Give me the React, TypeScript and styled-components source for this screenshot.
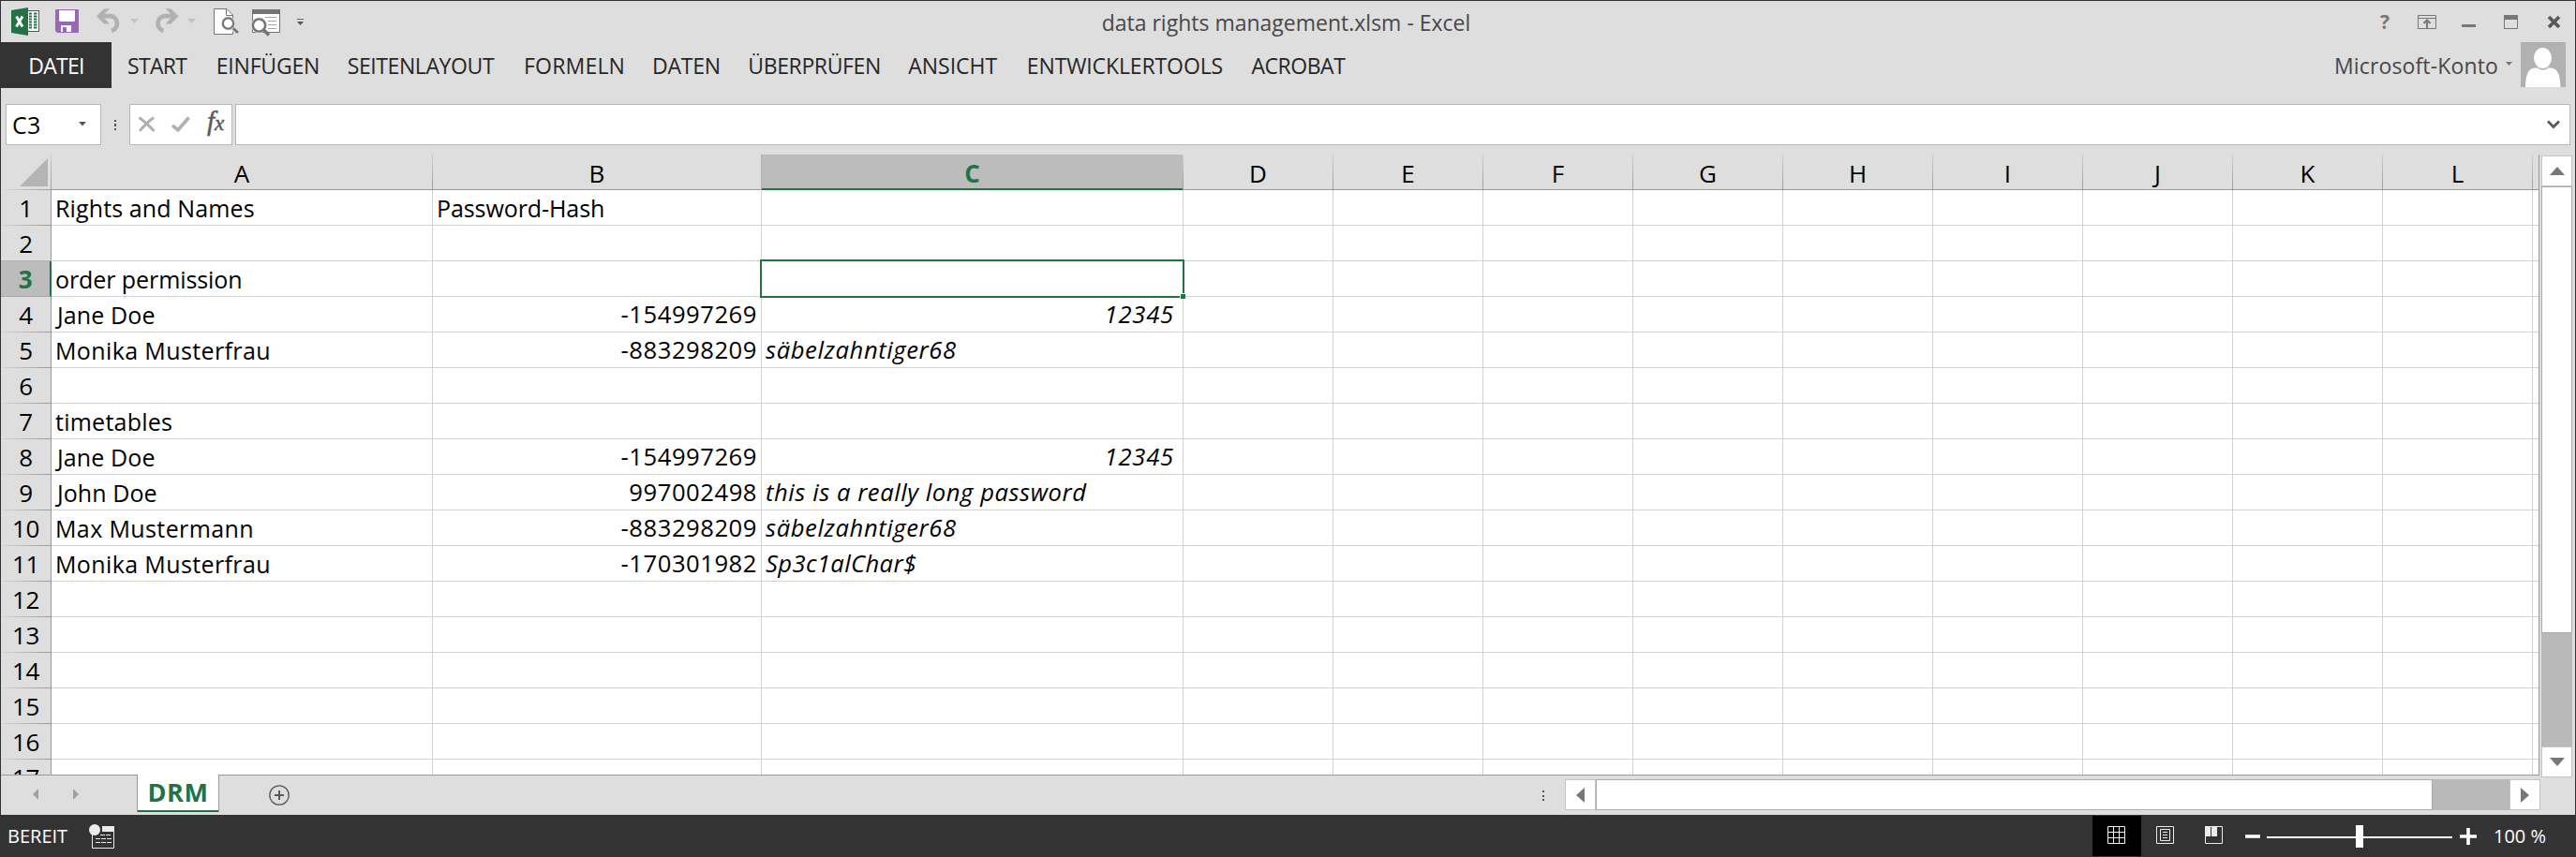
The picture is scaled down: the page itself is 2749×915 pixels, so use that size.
import React from "react";
import styled, { createGlobalStyle, css } from "styled-components";

const color = {
  chrome: "#dedede",
  dark: "#333333",
  green: "#217346",
  line: "#d2d2d2",
  edge: "#999999",
  box: "#b8b8b8",
  icon: "#777777",
  selected: "#bcbcbc",
};

const GlobalStyle = createGlobalStyle`
  *, *::before, *::after { box-sizing: border-box; }
  html, body { margin: 0; padding: 0; }
  body {
    background: ${color.chrome};
    font-family: "Open Sans", "Noto Sans", sans-serif;
    overflow: hidden;
  }
  svg { display: block; flex: none; }
`;

const Window = styled.div`
  display: flex;
  flex-direction: column;
  width: 2749px;
  height: 915px;
  background: ${color.chrome};
  border: solid ${color.dark};
  border-width: 1px 1px 0;
  overflow: hidden;
`;

/* Title bar */
const TitleBar = styled.header`
  display: grid;
  grid-template-columns: 1fr auto 1fr;
  height: 44px;
  flex: none;
`;
const QuickAccess = styled.div`
  display: flex;
  padding-left: 11px;
`;
const QuickSlot = styled.span<{ $gap?: number }>`
  margin-left: ${(p) => p.$gap ?? 0}px;
`;
const Title = styled.div`
  margin-right: 4px;
  padding-top: 2px;
  font-size: 23px;
  line-height: 42px;
  color: #484848;
  white-space: nowrap;
`;
const WindowButtons = styled.div`
  display: flex;
  justify-content: flex-end;
  align-items: center;
  padding-right: 15px;
`;
const WindowButton = styled.span<{ $gap: number }>`
  margin-right: ${(p) => p.$gap}px;
`;
const Help = styled(WindowButton)`
  width: 11px;
  font-size: 21px;
  font-weight: 700;
  line-height: 40px;
  color: ${color.icon};
`;

/* Ribbon */
const Ribbon = styled.nav`
  display: flex;
  height: 49px;
  flex: none;
`;
const FileTab = styled.div`
  width: 118px;
  margin-right: 17px;
  background: ${color.dark};
  color: #fff;
  font-size: 23px;
  letter-spacing: -0.7px;
  line-height: 50px;
  text-align: center;
`;
const RibbonTab = styled.div<{ $width: number; $spacing: number }>`
  flex: none;
  width: ${(p) => p.$width}px;
  font-size: 23px;
  letter-spacing: ${(p) => p.$spacing}px;
  line-height: 50px;
  color: #262626;
  white-space: nowrap;
`;
const Account = styled.div`
  display: flex;
  margin-left: auto;
  margin-right: 10px;
  font-size: 23px;
  letter-spacing: 0.14px;
  line-height: 50px;
  color: #484848;
`;
const AccountCaret = styled.span`
  margin: 21px 9px 0 8px;
`;

/* Formula bar */
const FormulaBar = styled.div`
  display: flex;
  height: 44px;
  margin: 17px 5px 10px;
  flex: none;
`;
const Field = styled.div`
  display: flex;
  align-items: center;
  background: #fff;
  border: 1px solid ${color.box};
`;
const NameBox = styled(Field)`
  width: 102px;
  padding: 0 15px 0 6px;
  justify-content: space-between;
  font-size: 25px;
  letter-spacing: 0.25px;
  line-height: 40px;
  color: #000;
`;
const FormulaButtons = styled(Field)`
  width: 110px;
  margin-right: 3px;
  padding-left: 8px;
  gap: 17px;
`;
const Fx = styled.span`
  margin: -5px 0 0 1px;
  font: italic 400 29px/30px "Liberation Serif", serif;
  -webkit-text-stroke: 0.5px #5a5a5a;
  color: #5a5a5a;
  small { font-size: 23px; }
`;
const FormulaInput = styled(Field)`
  flex: 1;
  justify-content: flex-end;
  padding-right: 10px;
`;
const Grip = styled.div<{ $before: number; $after: number; $top: number }>`
  width: 2px;
  height: 11px;
  margin: ${(p) => p.$top}px ${(p) => p.$after}px 0 ${(p) => p.$before}px;
  background: repeating-linear-gradient(#555 0 2px, transparent 2px 4.5px);
  flex: none;
`;

/* Sheet */
const Workspace = styled.div`
  display: flex;
  height: 663px;
  flex: none;
`;
const Sheet = styled.main`
  width: 2709px;
  height: 663px;
  overflow: hidden;
  background: #fff;
  border: solid ${color.edge};
  border-width: 0 1px 1px 0;
`;
const ColumnHeads = styled.div`
  display: flex;
  width: 2709px;
  height: 38px;
  background: ${color.chrome};
`;
const headBase = css`
  flex: none;
  color: #000;
  font-size: 26px;
  text-align: center;
`;
const ColumnHead = styled.div<{ $width: number; $active?: boolean }>`
  ${headBase}
  position: relative;
  width: ${(p) => p.$width}px;
  height: 38px;
  padding-top: 1px;
  line-height: 39px;
  border-right: 1px solid;
  border-image: linear-gradient(#d0d0d0, ${color.edge}) 1;
  box-shadow: inset 0 -1px ${color.edge};
  ${(p) =>
    p.$active &&
    css`
      background: ${color.selected};
      color: ${color.green};
      font-weight: 700;
      box-shadow: -1px 0 #b0b0b0, inset 0 -2px ${color.green};
    `}
`;
const Corner = styled.div`
  width: 54px;
  padding: 4px 0 0 20px;
  border-right: 1px solid;
  border-image: linear-gradient(#d0d0d0, ${color.edge}) 1;
  background: linear-gradient(90deg, ${color.chrome}, ${color.edge}) bottom / 100% 1px no-repeat;
`;
const HeadRest = styled.div`
  flex: 1;
  border-bottom: 1px solid ${color.edge};
`;
const Row = styled.div`
  display: flex;
  height: 38px;
`;
const RowHead = styled.div<{ $active?: boolean }>`
  ${headBase}
  width: 54px;
  height: 38px;
  letter-spacing: -0.4px;
  line-height: 38px;
  border-right: 1px solid ${color.edge};
  background:
    linear-gradient(90deg, #d6d6d6, ${color.edge}) bottom / 100% 1px no-repeat,
    ${color.chrome};
  ${(p) =>
    p.$active &&
    css`
      background: ${color.selected};
      color: ${color.green};
      font-weight: 700;
      border-right: 2px solid ${color.green};
      border-bottom: 1px solid #a8a8a8;
      box-shadow: 0 -1px #b4b4b4;
    `}
`;
const Cell = styled.div<{ $width: number; $column: string; $number?: boolean }>`
  position: relative;
  flex: none;
  width: ${(p) => p.$width}px;
  height: 38px;
  border: solid ${color.line};
  border-width: 0 1px 1px 0;
  padding: 0 ${(p) => (p.$column === "C" ? 9 : 4)}px 0 4px;
  font-size: ${(p) => (p.$column === "C" || p.$number ? 25.6 : 25)}px;
  font-style: ${(p) => (p.$column === "C" ? "italic" : "normal")};
  line-height: 38px;
  text-align: ${(p) => (p.$number ? "right" : "left")};
  white-space: nowrap;
  color: #000;
`;
const Entry = styled.span<{ $spacing: number; $indent?: number }>`
  margin-left: ${(p) => p.$indent ?? 0}px;
  letter-spacing: ${(p) => p.$spacing}px;
`;
const CellRest = styled.div`
  flex: 1;
  border-bottom: 1px solid ${color.line};
`;
const Selection = styled.div`
  position: absolute;
  z-index: 1;
  left: -2px;
  top: -2px;
  width: 453px;
  height: 41px;
  border: 2px solid ${color.green};
  &::after {
    content: "";
    position: absolute;
    right: -3px;
    bottom: -3px;
    width: 6px;
    height: 6px;
    background: ${color.green};
    border: solid #fff;
    border-width: 1px 0 0 1px;
  }
`;

/* Scroll bars */
const VerticalScroll = styled.div`
  display: flex;
  flex-direction: column;
  width: 33px;
  height: 664px;
  margin: 1px 0 0 2px;
  background: #b9b9b9;
`;
const ScrollButton = styled.div`
  display: flex;
  align-items: center;
  justify-content: center;
  flex: none;
  width: 33px;
  height: 33px;
  background: #fff;
  border: 1px solid #c4c4c4;
`;
const VerticalThumb = styled.div`
  height: 477px;
  margin-bottom: 121px;
  background: #fff;
  border: 1px solid #ababab;
`;
const HorizontalScroll = styled.div`
  display: flex;
  width: 1041px;
  height: 33px;
  margin: 4px 37px 0 0;
  background: #b9b9b9;
`;
const HorizontalThumb = styled.div`
  width: 893px;
  margin-right: 82px;
  background: #fff;
  border: 1px solid #ababab;
`;

/* Sheet tabs */
const TabStrip = styled.div`
  display: flex;
  height: 42px;
  flex: none;
`;
const TabArrows = styled.div`
  display: flex;
  width: 145px;
  padding: 14px 0 0 34px;
  gap: 37px;
`;
const SheetTab = styled.div`
  position: relative;
  width: 88px;
  height: 40px;
  margin-top: -1px;
  background: #fff;
  border: solid ${color.edge};
  border-width: 0 1px;
  box-shadow: inset 0 -2px ${color.green};
  color: ${color.green};
  font-size: 27px;
  font-weight: 700;
  letter-spacing: 0.6px;
  line-height: 38px;
  text-align: center;
`;
const NewSheet = styled.div`
  margin: 10px auto 0 53px;
`;

/* Status bar */
const StatusBar = styled.footer`
  display: flex;
  align-items: center;
  height: 45px;
  margin: 0 -1px;
  padding-left: 8px;
  flex: none;
  background: ${color.dark};
  color: #fff;
  font-size: 20px;
`;
const Ready = styled.span`
  width: 87px;
`;
const ViewButtons = styled.div`
  display: flex;
  margin-left: auto;
`;
const ViewButton = styled.div<{ $active?: boolean }>`
  display: flex;
  align-items: center;
  justify-content: center;
  width: 52px;
  height: 43px;
  padding: 0 1px 2px 0;
  background: ${(p) => (p.$active ? "#000" : "transparent")};
`;
const Zoom = styled.div`
  display: flex;
  align-items: center;
  margin-left: 7px;
`;
const ZoomTrack = styled.div`
  display: flex;
  align-items: center;
  justify-content: center;
  width: 198px;
  height: 24px;
  margin: 0 8px 0 7px;
  background: linear-gradient(#fff, #fff) center 12px / 100% 2px no-repeat;
`;
const ZoomThumb = styled.div`
  width: 8px;
  height: 24px;
  background: #fff;
`;
const ZoomValue = styled.span`
  width: 88px;
  margin-left: 18px;
`;

const Triangle = ({ w, h, points, fill = color.icon }: { w: number; h: number; points: string; fill?: string }) => (
  <svg width={w} height={h} viewBox={`0 0 ${w} ${h}`}>
    <polygon points={points} fill={fill} />
  </svg>
);

const ExcelLogo = () => (
  <svg width="30" height="44" viewBox="12 1 30 44">
    <rect x="28.5" y="11.5" width="13" height="22" fill="#fff" stroke={color.green} />
    <path
      d="M31 14.5h3M36 14.5h3.5M31 17.5h3M36 17.5h3.5M31 20.5h3M36 20.5h3.5M31 23.5h3M36 23.5h3.5M31 26.5h3M36 26.5h3.5M31 29.5h3M36 29.5h3.5"
      stroke={color.green}
      strokeWidth="2"
    />
    <path d="M12 11L30 8V38L12 35Z" fill={color.green} />
    <path d="M17.5 17.5L24 28.5M24 17.5L17.5 28.5" stroke="#fff" strokeWidth="2.8" />
  </svg>
);
const SaveIcon = () => (
  <svg width="25" height="44" viewBox="59 1 25 44">
    <path d="M60 10H83Q84 10 84 11V34Q84 35 83 35H61L59 33V11Q59 10 60 10Z" fill="#9a68b9" />
    <path d="M63 11H80V22L79 23H64L63 22Z" fill="#fff" />
    <path d="M65 27H76V34H71V29H67V34H65Z" fill="#fff" />
  </svg>
);
const UndoIcon = ({ redo }: { redo?: boolean }) => (
  <svg width="27" height="44" viewBox="0 1 27 44">
    <g transform={redo ? "matrix(-1 0 0 1 26.5 0)" : undefined} fill="none" stroke="#b1b1b1">
      <path d="M3 17.2H15.5A8 8 0 0 1 16 32.8" strokeWidth="4.8" />
      <path d="M0 17.2L8 9.2H14L6 17.2L14 25.6H8Z" fill="#b1b1b1" stroke="none" />
    </g>
  </svg>
);
const QuickCaret = () => (
  <svg width="9" height="44" viewBox="0 1 9 44">
    <polygon points="0,20 9,20 4.5,25" fill="#c2c2c2" />
  </svg>
);
const PreviewIcon = () => (
  <svg width="27" height="44" viewBox="228 1 27 44">
    <path d="M228.5 9.5H242L248.5 16V36.5H228.5Z" fill="#fff" stroke="#777" />
    <path d="M241.5 10V16.5H248" fill="none" stroke="#777" />
    <path d="M247 29L254 35" stroke="#dedede" strokeWidth="5" />
    <path d="M248 29.5L254 35" stroke="#777" strokeWidth="3" />
    <circle cx="243.5" cy="25" r="7.5" fill="#dedede" />
    <circle cx="243.5" cy="25" r="5.6" fill="#fff" stroke="#777" strokeWidth="2.2" />
  </svg>
);
const PrintWindowIcon = () => (
  <svg width="31" height="44" viewBox="268 1 31 44">
    <rect x="269.5" y="10.5" width="29" height="24" fill="#fff" stroke="#737373" />
    <rect x="269" y="10" width="30" height="5" fill="#737373" />
    <path d="M283 18.5H295M286 22.5H295M286 26.5H295M286 30.5H295" stroke="#a5a5a5" />
    <path d="M281 31.5L287 37.5" stroke="#737373" strokeWidth="3.4" />
    <circle cx="276.5" cy="27" r="8.4" fill="#dedede" />
    <circle cx="276.5" cy="27" r="6.6" fill="#fff" stroke="#737373" strokeWidth="2.4" />
    <path d="M281 31.5L286 36.5" stroke="#737373" strokeWidth="3" />
  </svg>
);
const CustomizeIcon = () => (
  <svg width="7" height="44" viewBox="317 1 7 44">
    <path d="M317 20.5H324" stroke="#666" />
    <polygon points="317,23 324,23 320.5,27" fill="#555" />
  </svg>
);
const RibbonOptionsIcon = () => (
  <svg width="20" height="15" viewBox="0 0 20 15" fill="none" stroke={color.icon}>
    <path d="M.5.5H19.5V14.5H.5ZM.5 3.5H19.5" />
    <path d="M10 14V6M6.5 9L10 5.5L13.5 9" strokeWidth="2" />
  </svg>
);
const MinimizeIcon = () => (
  <svg width="15" height="15" viewBox="0 0 15 15">
    <rect y="10" width="15" height="3" fill={color.icon} />
  </svg>
);
const RestoreIcon = () => (
  <svg width="15" height="15" viewBox="0 0 15 15">
    <rect x=".5" y=".5" width="14" height="14" fill="none" stroke={color.icon} />
    <rect width="15" height="5" fill={color.icon} />
  </svg>
);
const CloseIcon = () => (
  <svg width="15" height="15" viewBox="0 0 15 15">
    <path d="M2 2L13 13M13 2L2 13" stroke="#5a5a5a" strokeWidth="3.8" />
  </svg>
);
const Avatar = () => (
  <svg width="48" height="48" viewBox="0 0 48 48">
    <rect width="48" height="48" fill="#b1b1b1" />
    <path d="M5 48C5.500 34 8 28 15 27.500H18Q23.500 32 29.500 27.500H32C39.500 28 42 34 42.500 48Z" fill="#fff" />
    <ellipse cx="23.500" cy="17" rx="9.500" ry="11" fill="#fff" />
  </svg>
);
const CancelIcon = () => (
  <svg width="19" height="18" viewBox="0 0 19 18">
    <path d="M1.500 1.500Q9 7 17.500 16M17 1.500Q8 8 2 16" fill="none" stroke="#b0b0b0" strokeWidth="2.800" />
  </svg>
);
const AcceptIcon = () => (
  <svg width="20" height="18" viewBox="0 0 20 18">
    <path d="M1 10L7 14.800L18.500 1.500" fill="none" stroke="#b0b0b0" strokeWidth="3.600" />
  </svg>
);
const ExpandIcon = () => (
  <svg width="14" height="10" viewBox="0 0 14 10">
    <path d="M1 1.500L7 7.500L13 1.500" fill="none" stroke="#5a5a5a" strokeWidth="2.800" />
  </svg>
);
const PlusCircle = () => (
  <svg width="22" height="22" viewBox="0 0 22 22" fill="none" stroke="#5a5a5a">
    <circle cx="11" cy="11" r="10.200" strokeWidth="1.300" />
    <path d="M6 11H16M11 6V16" strokeWidth="2" />
  </svg>
);
const MacroIcon = () => (
  <svg width="27" height="26" viewBox="0 0 27 26">
    <path d="M3.500 11V25.500H26.500V7" fill="none" stroke="#ececec" />
    <rect x="14" y="2" width="13" height="6" fill="#ececec" />
    <path d="M12 11.500H24M7 15.500H24M7 19.500H24" stroke="#ececec" strokeDasharray="5 1" />
    <circle cx="6" cy="6" r="6" fill="#ececec" />
  </svg>
);
const NormalView = () => (
  <svg width="19" height="19" viewBox="0 0 19 19">
    <path d="M.5.5H18.500V18.500H.5ZM6.500 0V19M12.500 0V19M0 6.500H19M0 12.500H19" fill="none" stroke="#f2f2f2" />
  </svg>
);
const PageView = () => (
  <svg width="19" height="19" viewBox="0 0 19 19" fill="none" stroke="#ececec">
    <path d="M.5.5H18.500V18.500H.5ZM4.500 3.500H14.500V15.500H4.500ZM7 6.500H12M7 9.500H12M7 12.500H12" />
  </svg>
);
const BreakView = () => (
  <svg width="19" height="19" viewBox="0 0 19 19">
    <path d="M.5.5H18.500V18.500H.5Z" fill="none" stroke="#ececec" />
    <path d="M0 0H6V11H0ZM7 0H13V11H7Z" fill="#ececec" />
  </svg>
);
const ZoomSign = ({ plus }: { plus?: boolean }) => (
  <svg width={plus ? 18 : 16} height="18" viewBox={plus ? "0 0 18 18" : "1 0 16 18"}>
    <path d={plus ? "M0 9H18M9 0V18" : "M1 9H17"} stroke="#fff" strokeWidth="3.600" />
  </svg>
);

const tabs: [string, number, number][] = [
  ["START", 94.7, -0.7],
  ["EINFÜGEN", 140, -0.19],
  ["SEITENLAYOUT", 188.3, -0.4],
  ["FORMELN", 137, 0.2],
  ["DATEN", 102.3, -0.22],
  ["ÜBERPRÜFEN", 171, -0.37],
  ["ANSICHT", 126.5, -0.02],
  ["ENTWICKLERTOOLS", 239.6, -0.12],
  ["ACROBAT", 110, -0.45],
];

const columns: [string, number][] = [
  ["A", 407],
  ["B", 351],
  ["C", 450],
  ..."DEFGHIJKL".split("").map((c): [string, number] => [c, 160]),
];

type Value = { text: string; spacing: number; number?: boolean; indent?: number };
const janeHash: Value = { text: "-154997269", spacing: 0.55, number: true };
const tigerHash: Value = { text: "-883298209", spacing: 0.55, number: true };
const digits: Value = { text: "12345", spacing: 0.8, number: true };
const tiger: Value = { text: "säbelzahntiger68", spacing: 0.6 };
const jane: Value = { text: "Jane Doe", spacing: 0.12, indent: 2 };
const monika: Value = { text: "Monika Musterfrau", spacing: 0.38 };

const data: Record<number, Record<string, Value>> = {
  1: { A: { text: "Rights and Names", spacing: 0.12 }, B: { text: "Password-Hash", spacing: -0.08 } },
  3: { A: { text: "order permission", spacing: -0.08 } },
  4: { A: jane, B: janeHash, C: digits },
  5: { A: monika, B: tigerHash, C: tiger },
  7: { A: { text: "timetables", spacing: 0.25 } },
  8: { A: jane, B: janeHash, C: digits },
  9: {
    A: { text: "John Doe", spacing: 0.06, indent: 2 },
    B: { text: "997002498", spacing: 0.55, number: true },
    C: { text: "this is a really long password", spacing: 0.56 },
  },
  10: { A: { text: "Max Mustermann", spacing: 0.38 }, B: tigerHash, C: tiger },
  11: { A: monika, B: { text: "-170301982", spacing: 0.55, number: true }, C: { text: "Sp3c1alChar$", spacing: 0.38 } },
};
const rows = Array.from({ length: 17 }, (_, i) => i + 1);

export default function App() {
  return (
    <>
      <GlobalStyle />
      <Window>
        <TitleBar>
          <QuickAccess>
            <QuickSlot><ExcelLogo /></QuickSlot>
            <QuickSlot $gap={17}><SaveIcon /></QuickSlot>
            <QuickSlot $gap={19}><UndoIcon /></QuickSlot>
            <QuickSlot $gap={9}><QuickCaret /></QuickSlot>
            <QuickSlot $gap={16}><UndoIcon redo /></QuickSlot>
            <QuickSlot $gap={9}><QuickCaret /></QuickSlot>
            <QuickSlot $gap={19}><PreviewIcon /></QuickSlot>
            <QuickSlot $gap={13}><PrintWindowIcon /></QuickSlot>
            <QuickSlot $gap={18}><CustomizeIcon /></QuickSlot>
          </QuickAccess>
          <Title>data rights management.xlsm - Excel</Title>
          <WindowButtons>
            <Help $gap={29}>?</Help>
            <WindowButton $gap={27}><RibbonOptionsIcon /></WindowButton>
            <WindowButton $gap={30}><MinimizeIcon /></WindowButton>
            <WindowButton $gap={31}><RestoreIcon /></WindowButton>
            <WindowButton $gap={0}><CloseIcon /></WindowButton>
          </WindowButtons>
        </TitleBar>

        <Ribbon>
          <FileTab>DATEI</FileTab>
          {tabs.map(([label, width, spacing]) => (
            <RibbonTab key={label} $width={width} $spacing={spacing}>{label}</RibbonTab>
          ))}
          <Account>
            Microsoft-Konto
            <AccountCaret><Triangle w={7} h={4} points="0,0 7,0 3.5,4" /></AccountCaret>
            <Avatar />
          </Account>
        </Ribbon>

        <FormulaBar>
          <NameBox>
            C3
            <Triangle w={8} h={7} points="0,0 8,0 4,4.5" fill="#555" />
          </NameBox>
          <Grip $before={14} $after={14} $top={17} />
          <FormulaButtons>
            <CancelIcon />
            <AcceptIcon />
            <Fx>f<small>x</small></Fx>
          </FormulaButtons>
          <FormulaInput><ExpandIcon /></FormulaInput>
        </FormulaBar>

        <Workspace>
          <Sheet>
            <ColumnHeads>
              <Corner><Triangle w={30} h={30} points="30,0 30,30 0,30" fill="#b4b4b4" /></Corner>
              {columns.map(([name, width]) => (
                <ColumnHead key={name} $width={width} $active={name === "C"}>{name}</ColumnHead>
              ))}
              <HeadRest />
            </ColumnHeads>
            {rows.map((row) => (
              <Row key={row}>
                <RowHead $active={row === 3}>{row}</RowHead>
                {columns.map(([name, width]) => {
                  const value = data[row]?.[name];
                  return (
                    <Cell key={name} $width={width} $column={name} $number={value?.number}>
                      {value && <Entry $spacing={value.spacing} $indent={value.indent}>{value.text}</Entry>}
                      {row === 3 && name === "C" && <Selection />}
                    </Cell>
                  );
                })}
                <CellRest />
              </Row>
            ))}
          </Sheet>
          <VerticalScroll>
            <ScrollButton><Triangle w={16} h={9} points="0,9 8,0 16,9" /></ScrollButton>
            <VerticalThumb />
            <ScrollButton><Triangle w={16} h={9} points="0,0 16,0 8,9" /></ScrollButton>
          </VerticalScroll>
        </Workspace>

        <TabStrip>
          <TabArrows>
            <Triangle w={6} h={12} points="6,0 6,12 0,6" fill="#a0a0a0" />
            <Triangle w={6} h={12} points="0,0 6,6 0,12" fill="#a0a0a0" />
          </TabArrows>
          <SheetTab>DRM</SheetTab>
          <NewSheet><PlusCircle /></NewSheet>
          <Grip $before={0} $after={22} $top={16} />
          <HorizontalScroll>
            <ScrollButton><Triangle w={9} h={16} points="9,0 9,16 0,8" /></ScrollButton>
            <HorizontalThumb />
            <ScrollButton><Triangle w={9} h={16} points="0,0 9,8 0,16" /></ScrollButton>
          </HorizontalScroll>
        </TabStrip>

        <StatusBar>
          <Ready>BEREIT</Ready>
          <MacroIcon />
          <ViewButtons>
            <ViewButton $active><NormalView /></ViewButton>
            <ViewButton><PageView /></ViewButton>
            <ViewButton><BreakView /></ViewButton>
          </ViewButtons>
          <Zoom>
            <ZoomSign />
            <ZoomTrack><ZoomThumb /></ZoomTrack>
            <ZoomSign plus />
            <ZoomValue>100 %</ZoomValue>
          </Zoom>
        </StatusBar>
      </Window>
    </>
  );
}
